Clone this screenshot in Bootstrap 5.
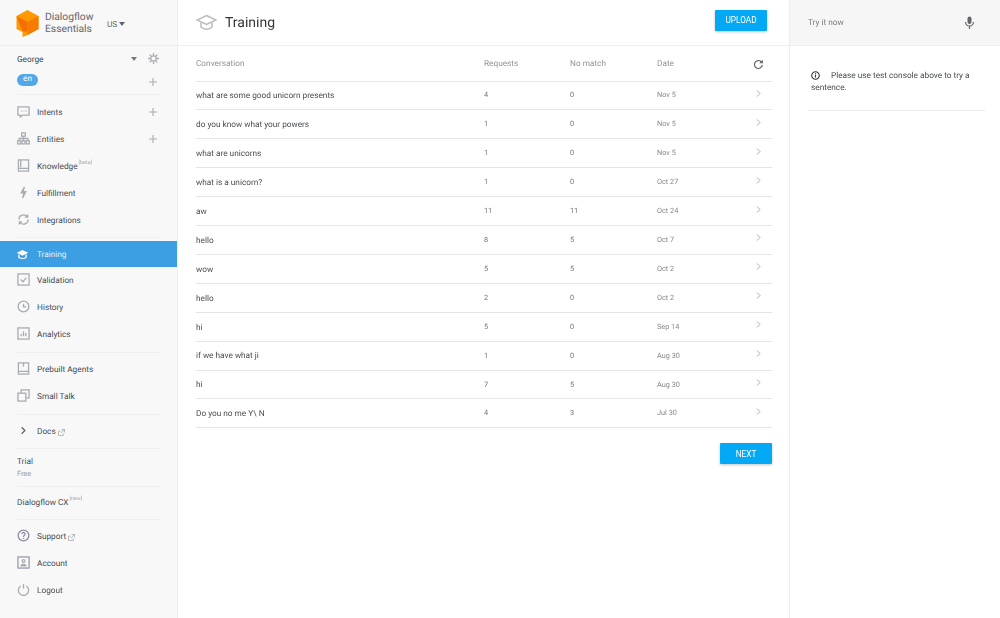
<!doctype html>
<html lang="en"><head><meta charset="utf-8"><title>Dialogflow Training</title>
<link href="https://cdn.jsdelivr.net/npm/bootstrap@5.3.0/dist/css/bootstrap.min.css" rel="stylesheet">
<style>
html,body{height:618px;overflow:hidden}
body{font-family:Roboto,"Liberation Sans",sans-serif;color:#474b50;background:#fff;font-size:8.25px;text-rendering:geometricPrecision}
.shell{height:618px;width:1000px;opacity:.999}
.side{width:178px;background:#f8f8f8;border-right:1px solid #eceef0;flex:none}
.logo-bar{height:46px;border-bottom:1px solid #eceef0;padding-left:16px}
.brand{font-size:10.3px;line-height:12px;color:#63676c;margin-left:6px;width:53px}
.region{font-size:8.25px;color:#63676c;margin-left:9px;margin-top:5px}
.caret-d{display:inline-block;border-left:3.5px solid transparent;border-right:3.5px solid transparent;border-top:4px solid #5f6368;margin-left:2px;vertical-align:1px}
.block{margin:0 17px}
.agent{height:25px;font-size:8.25px;color:#3f4348}
.agent-name{padding-top:3px}
.lang{height:24px;border-bottom:1px solid #eeeff1;padding-top:3px}
.pill{background:#52a7e8;color:#fff;border-radius:7px;width:21px;height:12px;line-height:11px;text-align:center;font-size:8.25px}
.item{height:27px;padding:2px 17px 0;color:#474b50;font-size:8.25px}
.item svg.ic{width:13px;height:13px;margin:-4px 7px 0 0;flex:none}
.ic *{fill:none;stroke:#a9acb1;stroke-width:1.4}
.plus{width:8px;height:8px;flex:none;margin:-4px 3px 0 auto}
.plus *{stroke:#a9acb1;stroke-width:1.4}
.item sup,.cx sup{font-size:5.4px;color:#a4a7ac;top:-.9em;margin-left:1px}
.ext{width:7px;height:7px;margin-left:2px}
.ext *{fill:none;stroke:#a4a7ac;stroke-width:.9}
.rule{height:1px;background:#eeeff1;margin:0 17px}
.active-item{height:26px;background:#3d9fe3;color:#e4f2fc;padding:2px 0 0 16px;font-size:8.25px;margin-top:3px}
.active-item svg{width:13px;height:12px;margin:-2px 8px 0 0}
.trial{height:37px;margin:0 17px;padding-top:7px;line-height:12px;color:#4a4e53}
.trial small{display:block;font-size:7.3px;line-height:11px;color:#96999e}
.cx{height:32px;margin:0 17px;padding-top:1px;font-size:8.25px}
.main-pane{flex:1;min-width:0;border-right:1px solid #eceef0}
.head-bar{height:46px;border-bottom:1px solid #eceef0;padding:0 22px 0 18px}
.head-bar svg{width:21px;height:18px;margin-right:8px}
.head-bar h1{font-size:14px;margin:0;padding-top:2px;font-weight:400;color:#33373c}
.act{background:#03a9f4;color:#fff;border:0;border-radius:1px;font-size:8.25px;line-height:1;box-shadow:0 1px 3px rgba(0,0,0,.25);display:flex;align-items:center;justify-content:center;padding:0}
.act-up{width:52px;height:21px;margin-bottom:4px}
.act-next{width:52px;height:21px}
.tbl-wrap{padding:0 17px 0 18px}
.data{width:576px;margin:0;table-layout:fixed;--bs-table-bg:transparent;font-size:8.25px;color:#474b50}
.data th,.data td{padding:0;border-bottom:1px solid #e4e5e7;vertical-align:middle;height:28.92px;font-weight:400;box-shadow:none}
.data td:first-child{padding-top:2px}
.data thead th{height:35px;color:#8f9297;padding-top:2px}
.data td.num{font-size:7.3px;color:#6e7277;padding-top:1px}
.data td.dt{font-size:7.3px;color:#84878c;padding-top:1px}
.chev{width:5px;height:7px;display:block;margin:-4px 0 0 49px}
.chev *{fill:none;stroke:#a7aaae;stroke-width:1}
.rf{width:11px;height:11px;display:block;margin:0 0 0 46px}
.rf *{fill:none;stroke:#5f6368;stroke-width:1.4}
.foot{padding-top:15px;width:594px}
.right-pane{width:210px;flex:none}
.try{height:46px;background:#f6f6f6;border-bottom:1px solid #eceef0;padding:0 25px 0 18px;color:#75797e;font-size:8.25px}
.try span{padding-top:2px}
.try svg{width:11px;height:13px}
.hint{margin:24px 15px 0 18px;padding:0 0 16px 3px;border-bottom:1px solid #eceef0;line-height:12px;color:#474b50}
.hint svg{width:9px;height:9px;margin-right:11px}
</style></head>
<body>
<div class="d-flex shell">
<aside class="side d-flex flex-column">
  <div class="logo-bar d-flex align-items-center">
    <svg width="23" height="28" viewBox="0 0 23 28" style="flex:none"><path d="M11.5 1 22.5 7v13L11.5 26l-5 2v-5L.5 20V7z" fill="#ff9800"/><path d="M.5 7l11 6v10l-5-1z" fill="#ef6c00" opacity=".9"/><path d="M11.5 13 22.5 7v13l-11 6z" fill="#f57c00"/></svg>
    <div class="brand">Dialogflow Essentials</div>
    <div class="region">US<span class="caret-d"></span></div>
  </div>
  <div class="block agent d-flex align-items-center">
    <span class="agent-name">George</span><span class="caret-d ms-auto" style="border-top-color:#777;border-left-width:3px;border-right-width:3px;margin-right:11px"></span>
    <svg width="11" height="11" viewBox="0 0 13 13" style="margin-right:1px"><circle cx="6.5" cy="6.5" r="3.2" fill="none" stroke="#a9acb1" stroke-width="1.4"/><path d="M6.5 0v3M6.5 10v3M0 6.5h3M10 6.500h3M1.900 1.900 4 4M9 9l2.100 2.100M1.900 11.100 4 9M9 4l2.100-2.100" stroke="#a9acb1" stroke-width="1.5"/></svg>
  </div>
  <div class="block lang d-flex align-items-start">
    <span class="pill">en</span>
    <svg class="plus" style="margin:4px 3px 0 auto" viewBox="0 0 10 10"><path d="M5 0v10M0 5h10"/></svg>
  </div>
  <div style="height:4px"></div>
  <div class="item d-flex align-items-center"><svg class="ic" viewBox="0 0 14 14"><path d="M1 2h12v9H6l-2.500 2v-2H1z"/><path d="M4.500 6.500h1M7 6.500h1M9.500 6.500h1"/></svg>Intents<svg class="plus" viewBox="0 0 10 10"><path d="M5 0v10M0 5h10"/></svg></div>
  <div class="item d-flex align-items-center"><svg class="ic" viewBox="0 0 14 14"><rect x="5" y="1" width="4" height="3.500"/><rect x=".7" y="9.500" width="3.300" height="3.300"/><rect x="5.300" y="9.500" width="3.300" height="3.300"/><rect x="10" y="9.500" width="3.300" height="3.300"/><path d="M7 4.500v5M2.300 9.500V7h9.400v2.500"/></svg>Entities<svg class="plus" viewBox="0 0 10 10"><path d="M5 0v10M0 5h10"/></svg></div>
  <div class="item d-flex align-items-center"><svg class="ic" viewBox="0 0 14 14"><rect x="1.500" y="1" width="11" height="12"/><path d="M4 1v8M1.500 10h11"/></svg>Knowledge<sup>[beta]</sup></div>
  <div class="item d-flex align-items-center"><svg class="ic" viewBox="0 0 14 14"><path d="M8 1 4.500 7.500h3L6 13l3.500-7h-3z" style="fill:#a9acb1"/></svg>Fulfillment</div>
  <div class="item d-flex align-items-center"><svg class="ic" viewBox="0 0 14 14"><path d="M2 7a5 5 0 0 1 8-4l1.500 1.500M12 7a5 5 0 0 1-8 4L2.500 9.500M11.500 1.500v3h-3M2.500 12.500v-3h3"/></svg>Integrations</div>
  <div class="rule" style="margin-top:3px"></div>
  <div class="active-item d-flex align-items-center"><svg viewBox="0 0 16 14"><path d="M8 2 15 5.500 8 9 1 5.500z" fill="#fff"/><path d="M3.500 7.500V11c2.500 2 6.500 2 9 0V7.500" fill="none" stroke="#fff" stroke-width="1.600"/></svg>Training</div>
  <div class="item d-flex align-items-center"><svg class="ic" viewBox="0 0 14 14"><rect x="1" y="1" width="12" height="12"/><path d="M4 7l2.500 2.500L10 5"/></svg>Validation</div>
  <div class="item d-flex align-items-center"><svg class="ic" viewBox="0 0 14 14"><circle cx="7" cy="7" r="5.800"/><path d="M7 4v3.300h3"/></svg>History</div>
  <div class="item d-flex align-items-center"><svg class="ic" viewBox="0 0 14 14"><rect x="1" y="1" width="12" height="12"/><path d="M4.500 10V7.500M7 10V4.500M9.500 10V6.500"/></svg>Analytics</div>
  <div class="rule" style="margin-top:4px;margin-bottom:3px"></div>
  <div class="item d-flex align-items-center"><svg class="ic" viewBox="0 0 14 14"><rect x="1.500" y="1" width="11" height="12"/><path d="M1.500 10h11M7 1v4"/></svg>Prebuilt Agents</div>
  <div class="item d-flex align-items-center"><svg class="ic" viewBox="0 0 14 14"><rect x="1" y="4.500" width="8.500" height="8.500"/><path d="M4.500 4.500V1H13v8.500H9.500"/></svg>Small Talk</div>
  <div class="rule" style="margin-top:4px;margin-bottom:3px"></div>
  <div class="item d-flex align-items-center"><svg class="ic" viewBox="0 0 14 14"><path d="M5 3.500 8.500 7 5 10.500" style="stroke:#63676c"/></svg>Docs<svg class="ext" viewBox="0 0 8 8"><path d="M6 5v2.500H.5v-5H3M4 .5h3.500V4M7.500 .5 3.500 4.500"/></svg></div>
  <div class="rule" style="margin-top:3px"></div>
  <div class="trial">Trial<small>Free</small></div>
  <div class="rule"></div>
  <div class="cx d-flex align-items-center">Dialogflow CX<sup>[new]</sup></div>
  <div class="rule" style="margin-bottom:3px"></div>
  <div class="item d-flex align-items-center"><svg class="ic" viewBox="0 0 14 14"><circle cx="7" cy="7" r="5.800" style="stroke:#8d8fa0"/><path d="M5.300 5.500a1.700 1.700 0 1 1 2.400 1.500C7 7.400 7 8 7 8.600M7 9.800v1" style="stroke:#8d8fa0"/></svg>Support<svg class="ext" viewBox="0 0 8 8"><path d="M6 5v2.500H.5v-5H3M4 .5h3.500V4M7.500 .5 3.500 4.500"/></svg></div>
  <div class="item d-flex align-items-center"><svg class="ic" viewBox="0 0 14 14"><rect x="1" y="1" width="12" height="12" style="stroke:#9a9caa"/><circle cx="7" cy="5.500" r="1.500"/><path d="M4.500 10.500c0-2 5-2 5 0z"/></svg>Account</div>
  <div class="item d-flex align-items-center"><svg class="ic" viewBox="0 0 14 14"><path d="M4 3.300a5.500 5.500 0 1 0 6 0M7 1v5"/></svg>Logout</div>
</aside>
<main class="main-pane">
  <div class="head-bar d-flex align-items-center">
    <svg viewBox="0 0 21 18"><path d="M10.500 1.500 20 6l-9.500 4.500L1 6z" fill="none" stroke="#b9bbbe" stroke-width="1.500"/><path d="M5 8.500V13c3 3 8 3 11 0V8.500" fill="none" stroke="#b9bbbe" stroke-width="1.500"/></svg>
    <h1>Training</h1>
    <button class="act act-up ms-auto" type="button">UPLOAD</button>
  </div>
  <div class="tbl-wrap">
  <table class="table data">
    <colgroup><col style="width:288px"><col style="width:86px"><col style="width:87px"><col style="width:50px"><col></colgroup>
    <thead><tr><th>Conversation</th><th>Requests</th><th>No match</th><th>Date</th><th><svg class="rf" viewBox="0 0 14 14"><path d="M11.800 7.500a5 5 0 1 1-1.400-4L12 5"/><path d="M12.500 1v4.500H8" style="fill:#5f6368;stroke:none"/></svg></th></tr></thead>
    <tbody>
    <tr><td>what are some good unicorn presents</td><td class="num">4</td><td class="num">0</td><td class="dt">Nov 5</td><td><svg class="chev" viewBox="0 0 5 7"><path d="M1 .5 4 3.500 1 6.500"/></svg></td></tr>
    <tr><td>do you know what your powers</td><td class="num">1</td><td class="num">0</td><td class="dt">Nov 5</td><td><svg class="chev" viewBox="0 0 5 7"><path d="M1 .5 4 3.500 1 6.500"/></svg></td></tr>
    <tr><td>what are unicorns</td><td class="num">1</td><td class="num">0</td><td class="dt">Nov 5</td><td><svg class="chev" viewBox="0 0 5 7"><path d="M1 .5 4 3.500 1 6.500"/></svg></td></tr>
    <tr><td>what is a unicorn?</td><td class="num">1</td><td class="num">0</td><td class="dt">Oct 27</td><td><svg class="chev" viewBox="0 0 5 7"><path d="M1 .5 4 3.500 1 6.500"/></svg></td></tr>
    <tr><td>aw</td><td class="num">11</td><td class="num">11</td><td class="dt">Oct 24</td><td><svg class="chev" viewBox="0 0 5 7"><path d="M1 .5 4 3.500 1 6.500"/></svg></td></tr>
    <tr><td>hello</td><td class="num">8</td><td class="num">5</td><td class="dt">Oct 7</td><td><svg class="chev" viewBox="0 0 5 7"><path d="M1 .5 4 3.500 1 6.500"/></svg></td></tr>
    <tr><td>wow</td><td class="num">5</td><td class="num">5</td><td class="dt">Oct 2</td><td><svg class="chev" viewBox="0 0 5 7"><path d="M1 .5 4 3.500 1 6.500"/></svg></td></tr>
    <tr><td>hello</td><td class="num">2</td><td class="num">0</td><td class="dt">Oct 2</td><td><svg class="chev" viewBox="0 0 5 7"><path d="M1 .5 4 3.500 1 6.500"/></svg></td></tr>
    <tr><td>hi</td><td class="num">5</td><td class="num">0</td><td class="dt">Sep 14</td><td><svg class="chev" viewBox="0 0 5 7"><path d="M1 .5 4 3.500 1 6.500"/></svg></td></tr>
    <tr><td>if we have what ji</td><td class="num">1</td><td class="num">0</td><td class="dt">Aug 30</td><td><svg class="chev" viewBox="0 0 5 7"><path d="M1 .5 4 3.500 1 6.500"/></svg></td></tr>
    <tr><td>hi</td><td class="num">7</td><td class="num">5</td><td class="dt">Aug 30</td><td><svg class="chev" viewBox="0 0 5 7"><path d="M1 .5 4 3.500 1 6.500"/></svg></td></tr>
    <tr><td>Do you no me Y\ N</td><td class="num">4</td><td class="num">3</td><td class="dt">Jul 30</td><td><svg class="chev" viewBox="0 0 5 7"><path d="M1 .5 4 3.500 1 6.500"/></svg></td></tr>
    </tbody>
  </table>
  </div>
  <div class="d-flex justify-content-end foot"><button class="act act-next" type="button">NEXT</button></div>
</main>
<section class="right-pane">
  <div class="try d-flex align-items-center justify-content-between"><span>Try it now</span><svg viewBox="0 0 11 13"><rect x="3.500" y=".5" width="4" height="7.500" rx="2" fill="#63676c"/><path d="M1.500 6a4 4 0 0 0 8 0M5.500 10v3" fill="none" stroke="#63676c" stroke-width="1.200"/></svg></div>
  <div class="hint"><svg viewBox="0 0 10 10"><circle cx="5" cy="5" r="4.200" fill="none" stroke="#33373c" stroke-width="1.200"/><path d="M5 4.300v3M5 2.500v1" stroke="#33373c" stroke-width="1.200"/></svg>Please use test console above to try a sentence.</div>
</section>
</div>
</body></html>
